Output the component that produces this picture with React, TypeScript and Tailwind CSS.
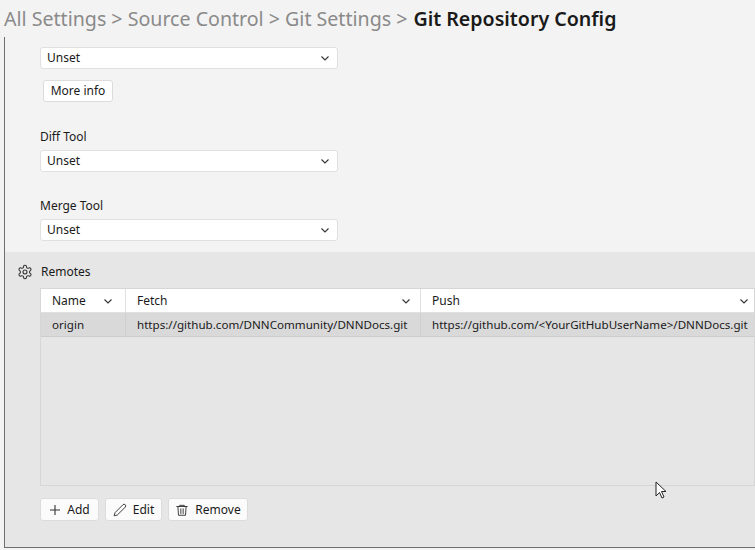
import React from "react";

const Chev = () => (
  <svg width="10" height="10" viewBox="0 0 10 10" className="shrink-0"><path d="M1.5 3.5 L5 7 L8.5 3.5" fill="none" stroke="#333" strokeWidth="1.1" /></svg>
);

const Select = () => (
  <div className="w-[298px] h-[22px] bg-white border border-[#e0e0e0] rounded-[3px] flex items-center justify-between pl-[6px] pr-[7px] text-[12px] text-[#1a1a1a]">
    <span>Unset</span><Chev />
  </div>
);

const Btn = ({ icon, label, w }: { icon: React.ReactNode; label: string; w: string }) => (
  <div className={`h-[23px] ${w} bg-[#fbfbfb] border border-[#dcdcdc] rounded-[3px] flex items-center justify-center gap-[6px] text-[12px] text-[#1a1a1a]`}>
    {icon}<span>{label}</span>
  </div>
);

export default function App() {
  return (
    <div className="w-[755px] h-[550px] bg-[#f3f3f3] overflow-hidden relative" style={{ fontFamily: '"Noto Sans", "Open Sans", sans-serif' }}>
      <div className="h-[37px] pl-[4px] flex items-center text-[19.6px] whitespace-nowrap">
        <span className="text-[#8a8a8a]">All Settings &gt; Source Control &gt; Git Settings &gt; </span>
        <span className="text-[#1a1a1a] font-semibold ml-[6px]">Git Repository Config</span>
      </div>
      <div className="ml-[4px] h-[511px] border-l border-b border-[#6e6e6e] flex flex-col">
        <div className="pl-[35px] pt-[10px] flex flex-col">
          <Select />
          <div className="mt-[11px] ml-[3px] w-[70px] h-[22px] bg-white border border-[#dcdcdc] rounded-[3px] flex items-center justify-center text-[12px] text-[#1a1a1a]">More info</div>
          <div className="mt-[24px] text-[12px] text-[#1a1a1a] h-[22px] flex items-center">Diff Tool</div>
          <div className="mt-[2px]"><Select /></div>
          <div className="mt-[23px] text-[12px] text-[#1a1a1a] h-[22px] flex items-center">Merge Tool</div>
          <div className="mt-[2px]"><Select /></div>
        </div>
        <div className="mt-[11px] flex-1 bg-[#e6e6e6] flex flex-col">
          <div className="h-[36px] pt-[3px] pl-[12px] flex items-center gap-[8px] text-[12px] text-[#1a1a1a]">
            <svg width="16" height="16" viewBox="0 0 24 24" fill="none" stroke="#333" strokeWidth="1.6" strokeLinecap="round" strokeLinejoin="round"><path d="M12.22 2h-.44a2 2 0 0 0-2 2v.18a2 2 0 0 1-1 1.73l-.43.25a2 2 0 0 1-2 0l-.15-.08a2 2 0 0 0-2.730.73l-.22.38a2 2 0 0 0 .73 2.73l.15.1a2 2 0 0 1 1 1.72v.51a2 2 0 0 1-1 1.74l-.15.09a2 2 0 0 0-.73 2.730l.22.38a2 2 0 0 0 2.73.73l.15-.08a2 2 0 0 1 2 0l.43.25a2 2 0 0 1 1 1.73V20a2 2 0 0 0 2 2h.44a2 2 0 0 0 2-2v-.18a2 2 0 0 1 1-1.73l.43-.25a2 2 0 0 1 2 0l.15.08a2 2 0 0 0 2.73-.73l.22-.39a2 2 0 0 0-.73-2.73l-.15-.08a2 2 0 0 1-1-1.74v-.5a2 2 0 0 1 1-1.74l.15-.09a2 2 0 0 0 .73-2.73l-.22-.38a2 2 0 0 0-2.73-.73l-.15.08a2 2 0 0 1-2 0l-.43-.25a2 2 0 0 1-1-1.73V4a2 2 0 0 0-2-2z"/><circle cx="12" cy="12" r="3"/></svg>
            <span>Remotes</span>
          </div>
          <div className="ml-[35px] h-[198px] border border-[#d6d6d6] flex flex-col text-[12px] text-[#1a1a1a]">
            <div className="h-[24px] bg-white flex border-b border-[#e0e0e0]">
              <div className="w-[85px] border-r border-[#e0e0e0] flex items-center justify-between pl-[11px] pr-[12px]"><span>Name</span><Chev /></div>
              <div className="w-[295px] border-r border-[#e0e0e0] flex items-center justify-between pl-[11px] pr-[9px]"><span>Fetch</span><Chev /></div>
              <div className="flex-1 flex items-center justify-between pl-[11px] pr-[5px]"><span>Push</span><Chev /></div>
            </div>
            <div className="h-[24px] bg-[#d9d9d9] flex border-b border-[#cccccc] whitespace-nowrap text-[11.6px]">
              <div className="w-[85px] border-r border-[#cfcfcf] flex items-center pl-[11px]">origin</div>
              <div className="w-[295px] border-r border-[#cfcfcf] flex items-center pl-[11px]">https://github.com/DNNCommunity/DNNDocs.git</div>
              <div className="flex-1 flex items-center pl-[11px] overflow-hidden">https://github.com/&lt;YourGitHubUserName&gt;/DNNDocs.git</div>
            </div>
          </div>
          <div className="ml-[35px] mt-[12px] flex gap-[6px]">
            <Btn w="w-[59px]" label="Add" icon={<svg width="12" height="12" viewBox="0 0 12 12"><path d="M6 1v10M1 6h10" stroke="#333" strokeWidth="1.1" /></svg>} />
            <Btn w="w-[57px]" label="Edit" icon={<svg width="14" height="14" viewBox="0 0 24 24" fill="none" stroke="#333" strokeWidth="1.6" strokeLinejoin="round"><path d="M17 3a2.8 2.8 0 0 1 4 4L7.5 20.5 2 22l1.5-5.5z" /></svg>} />
            <Btn w="w-[80px]" label="Remove" icon={<svg width="14" height="14" viewBox="0 0 24 24" fill="none" stroke="#333" strokeWidth="1.6" strokeLinecap="round"><path d="M3 6h18M8 6V4h8v2M5 6l1 15h12l1-15M10 10v8M14 10v8" /></svg>} />
          </div>
        </div>
      </div>
      <svg className="absolute left-[655px] top-[481px]" width="12" height="18" viewBox="0 0 12 18"><path d="M1 1v14l3.5-3.5 2.5 5.5 2-1-2.5-5.5H11z" fill="white" stroke="#222" strokeWidth="1" strokeLinejoin="round" /></svg>
    </div>
  );
}
